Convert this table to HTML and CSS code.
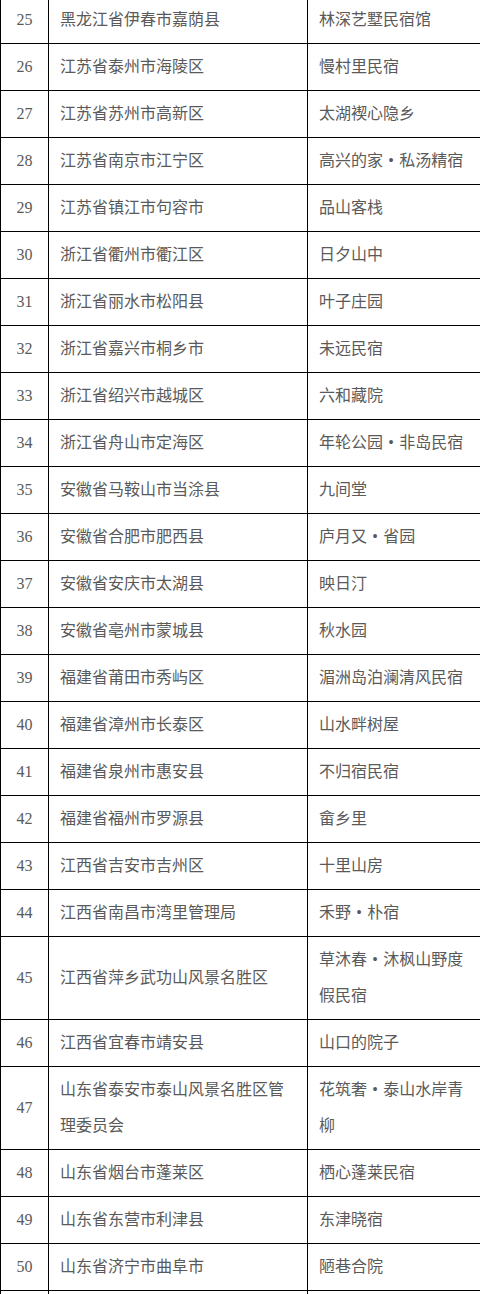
FILE: index.html
```html
<!DOCTYPE html>
<html lang="zh-CN">
<head>
<meta charset="utf-8">
<title>民宿名单</title>
<link rel="stylesheet" href="styles.css">
</head>
<body>
<table class="list">
<colgroup><col class="c-no"><col class="c-area"><col class="c-name"></colgroup>
<tbody>
<tr><td class="no">25</td><td>黑龙江省伊春市嘉荫县</td><td>林深艺墅民宿馆</td></tr>
<tr><td class="no">26</td><td>江苏省泰州市海陵区</td><td>慢村里民宿</td></tr>
<tr><td class="no">27</td><td>江苏省苏州市高新区</td><td>太湖褉心隐乡</td></tr>
<tr><td class="no">28</td><td>江苏省南京市江宁区</td><td>高兴的家&#8196;•&#8196;私汤精宿</td></tr>
<tr><td class="no">29</td><td>江苏省镇江市句容市</td><td>品山客栈</td></tr>
<tr><td class="no">30</td><td>浙江省衢州市衢江区</td><td>日夕山中</td></tr>
<tr><td class="no">31</td><td>浙江省丽水市松阳县</td><td>叶子庄园</td></tr>
<tr><td class="no">32</td><td>浙江省嘉兴市桐乡市</td><td>未远民宿</td></tr>
<tr><td class="no">33</td><td>浙江省绍兴市越城区</td><td>六和藏院</td></tr>
<tr><td class="no">34</td><td>浙江省舟山市定海区</td><td>年轮公园&#8196;•&#8196;非岛民宿</td></tr>
<tr><td class="no">35</td><td>安徽省马鞍山市当涂县</td><td>九间堂</td></tr>
<tr><td class="no">36</td><td>安徽省合肥市肥西县</td><td>庐月又&#8196;•&#8196;省园</td></tr>
<tr><td class="no">37</td><td>安徽省安庆市太湖县</td><td>映日汀</td></tr>
<tr><td class="no">38</td><td>安徽省亳州市蒙城县</td><td>秋水园</td></tr>
<tr><td class="no">39</td><td>福建省莆田市秀屿区</td><td>湄洲岛泊澜清风民宿</td></tr>
<tr><td class="no">40</td><td>福建省漳州市长泰区</td><td>山水畔树屋</td></tr>
<tr><td class="no">41</td><td>福建省泉州市惠安县</td><td>不归宿民宿</td></tr>
<tr><td class="no">42</td><td>福建省福州市罗源县</td><td>畲乡里</td></tr>
<tr><td class="no">43</td><td>江西省吉安市吉州区</td><td>十里山房</td></tr>
<tr><td class="no">44</td><td>江西省南昌市湾里管理局</td><td>禾野&#8196;•&#8196;朴宿</td></tr>
<tr><td class="no">45</td><td>江西省萍乡武功山风景名胜区</td><td>草沐春&#8196;•&#8196;沐枫山野度假民宿</td></tr>
<tr><td class="no">46</td><td>江西省宜春市靖安县</td><td>山口的院子</td></tr>
<tr><td class="no">47</td><td>山东省泰安市泰山风景名胜区管理委员会</td><td>花筑奢&#8196;•&#8196;泰山水岸青柳</td></tr>
<tr><td class="no">48</td><td>山东省烟台市蓬莱区</td><td>栖心蓬莱民宿</td></tr>
<tr><td class="no">49</td><td>山东省东营市利津县</td><td>东津晓宿</td></tr>
<tr><td class="no">50</td><td>山东省济宁市曲阜市</td><td>陋巷合院</td></tr>
<tr><td class="no">&nbsp;</td><td>&nbsp;</td><td>&nbsp;</td></tr>
</tbody>
</table>
</body>
</html>
```
FILE: styles.css
```css
html, body {
  margin: 0;
  padding: 0;
  background: #ffffff;
}

body {
  overflow: hidden;
}

.list {
  margin-top: -4px;
  width: 480px;
  border-collapse: collapse;
  table-layout: fixed;
  font-family: "Liberation Serif", "Noto Sans CJK SC", serif;
  font-size: 16px;
  color: #5a5a5a;
}

.c-no { width: 48px; }
.c-area { width: 259px; }
.c-name { width: 173px; }

.list td {
  border: 1px solid #000000;
  padding: 5px 11px 5px 11px;
  line-height: 36px;
  vertical-align: middle;
  text-align: left;
  word-break: break-all;
}

.list td.no {
  padding: 5px 0;
  text-align: center;
}
```
